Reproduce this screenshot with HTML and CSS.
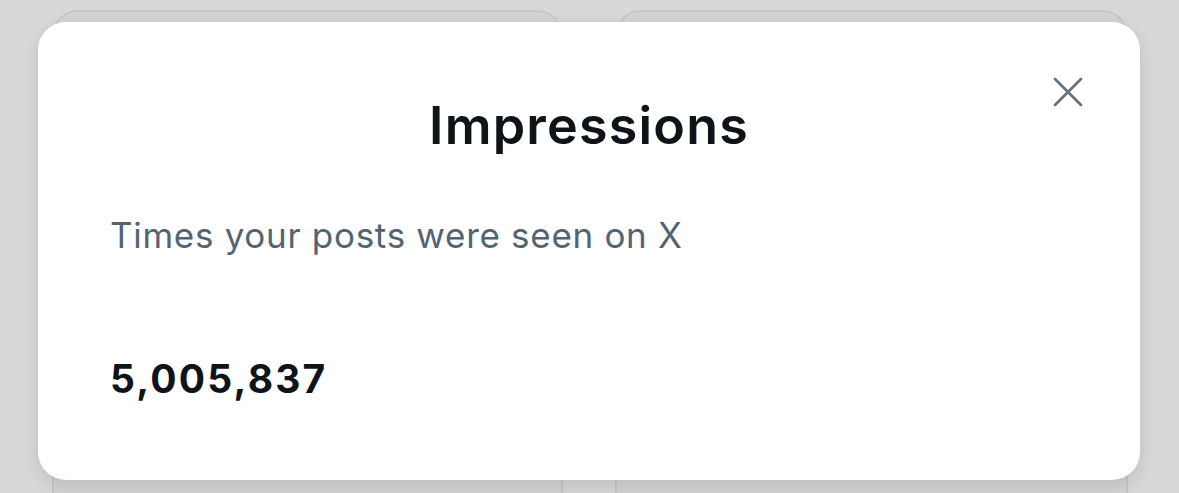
FILE: index.html
```html
<!DOCTYPE html>
<html lang="en">
<head>
<meta charset="utf-8">
<title>Impressions</title>
<link rel="stylesheet" href="styles.css">
</head>
<body>
  <div class="screen">
    <div class="cards">
      <div class="card"></div>
      <div class="card"></div>
    </div>
    <div class="sheet">
      <button class="close" aria-label="Close">
        <svg viewBox="0 0 30 30" width="30" height="30">
          <path d="M2 2 L28 28 M28 2 L2 28" stroke="currentColor" stroke-width="2.8" stroke-linecap="round" fill="none"/>
        </svg>
      </button>
      <h1 class="title">Impressions</h1>
      <p class="desc">Times your posts were seen on X</p>
      <p class="value">5,005,837</p>
    </div>
  </div>
</body>
</html>
```
FILE: styles.css
```css
* { box-sizing: border-box; }

html, body {
  margin: 0;
  padding: 0;
  width: 1179px;
  height: 493px;
  overflow: hidden;
}

body {
  background: #d8d8da;
  font-family: Inter, "Noto Sans", "Liberation Sans", sans-serif;
}

.screen {
  position: relative;
  width: 1179px;
  height: 493px;
  overflow: hidden;
}

.cards {
  display: grid;
  grid-template-columns: 511px 513px;
  column-gap: 52px;
  padding: 10px 0 0 52px;
  height: 100%;
}

.card {
  border: 2px solid #c6c7c9;
  border-bottom: none;
  border-radius: 26px 26px 0 0;
  background: #d3d4d6;
}

.sheet {
  position: absolute;
  left: 38px;
  top: 22px;
  width: 1102px;
  height: 458px;
  background: #ffffff;
  border-radius: 28px;
  box-shadow: 0 6px 18px rgba(0, 0, 0, 0.12);
  padding: 73px 72px 0 72px;
  display: flex;
  flex-direction: column;
}

.close {
  position: absolute;
  left: 1015px;
  top: 55px;
  width: 30px;
  height: 30px;
  padding: 0;
  border: none;
  background: none;
  color: #66737d;
}

.close svg { display: block; }

.title {
  margin: 0;
  text-align: center;
  font-size: 52px;
  line-height: 62px;
  font-weight: 600;
  color: #0f1419;
  letter-spacing: 1.2px;
}

.desc {
  margin: 57px 0 0 0;
  font-size: 35px;
  line-height: 42px;
  font-weight: 400;
  color: #536471;
  letter-spacing: 0.7px;
}

.value {
  margin: 99px 0 0 0;
  font-size: 39px;
  line-height: 48px;
  font-weight: 700;
  color: #0f1419;
  letter-spacing: 2.2px;
}
```
